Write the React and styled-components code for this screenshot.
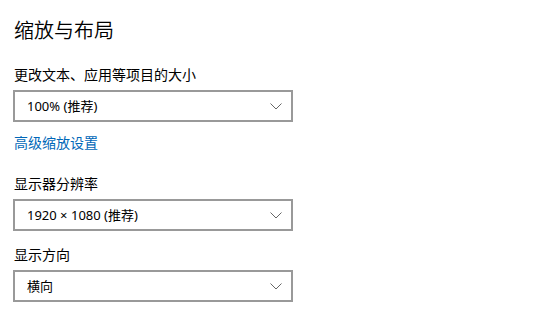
import React from "react";
import styled, { createGlobalStyle } from "styled-components";

const Global = createGlobalStyle`
  html, body { margin: 0; padding: 0; background: #fff; }
  body {
    font-family: "Noto Sans", "Noto Sans CJK SC", sans-serif;
    color: #000;
  }
`;

const Page = styled.div`
  width: 544px;
  height: 310px;
  box-sizing: border-box;
  padding: 16px 0 0 13px;
  display: flex;
  flex-direction: column;
  align-items: flex-start;
  overflow: hidden;
`;

const Title = styled.h1`
  margin: 0 0 0 1px;
  font-family: "Noto Sans CJK SC", sans-serif;
  font-weight: 350;
  font-size: 20px;
  line-height: 28px;
`;

const Label = styled.div`
  margin-top: ${(p) => p.$mt}px;
  margin-left: 1px;
  font-family: "Noto Sans CJK SC", sans-serif;
  font-size: 14px;
  line-height: 20px;
`;

const Link = styled.a`
  margin-top: ${(p) => p.$mt}px;
  margin-left: 1px;
  font-family: "Noto Sans CJK SC", sans-serif;
  font-size: 14px;
  line-height: 20px;
  color: #0067b8;
  text-decoration: none;
  cursor: pointer;
`;

const Select = styled.div`
  margin-top: ${(p) => p.$mt}px;
  width: 280px;
  height: 32px;
  box-sizing: border-box;
  border: 2px solid #999;
  display: flex;
  align-items: center;
  justify-content: space-between;
  padding: 0 9px 0 12px;
  font-family: "Noto Sans", "Noto Sans CJK SC", sans-serif;
  font-size: 13px;
`;

const Value = styled.span`
  line-height: 20px;
`;

const Chevron = () => (
  <svg width="12" height="7" viewBox="0 0 12 7" fill="none">
    <path d="M0.5 0.5 L6 6 L11.5 0.5" stroke="#666" strokeWidth="1" />
  </svg>
);

function Dropdown({ value, mt }) {
  return (
    <Select $mt={mt}>
      <Value>{value}</Value>
      <Chevron />
    </Select>
  );
}

export default function App() {
  return (
    <>
      <Global />
      <Page>
        <Title>缩放与布局</Title>
        <Label $mt={20}>更改文本、应用等项目的大小</Label>
        <Dropdown mt={6} value="100% (推荐)" />
        <Link $mt={10}>高级缩放设置</Link>
        <Label $mt={21}>显示器分辨率</Label>
        <Dropdown mt={6} value="1920 × 1080 (推荐)" />
        <Label $mt={13}>显示方向</Label>
        <Dropdown mt={6} value="横向" />
      </Page>
    </>
  );
}
